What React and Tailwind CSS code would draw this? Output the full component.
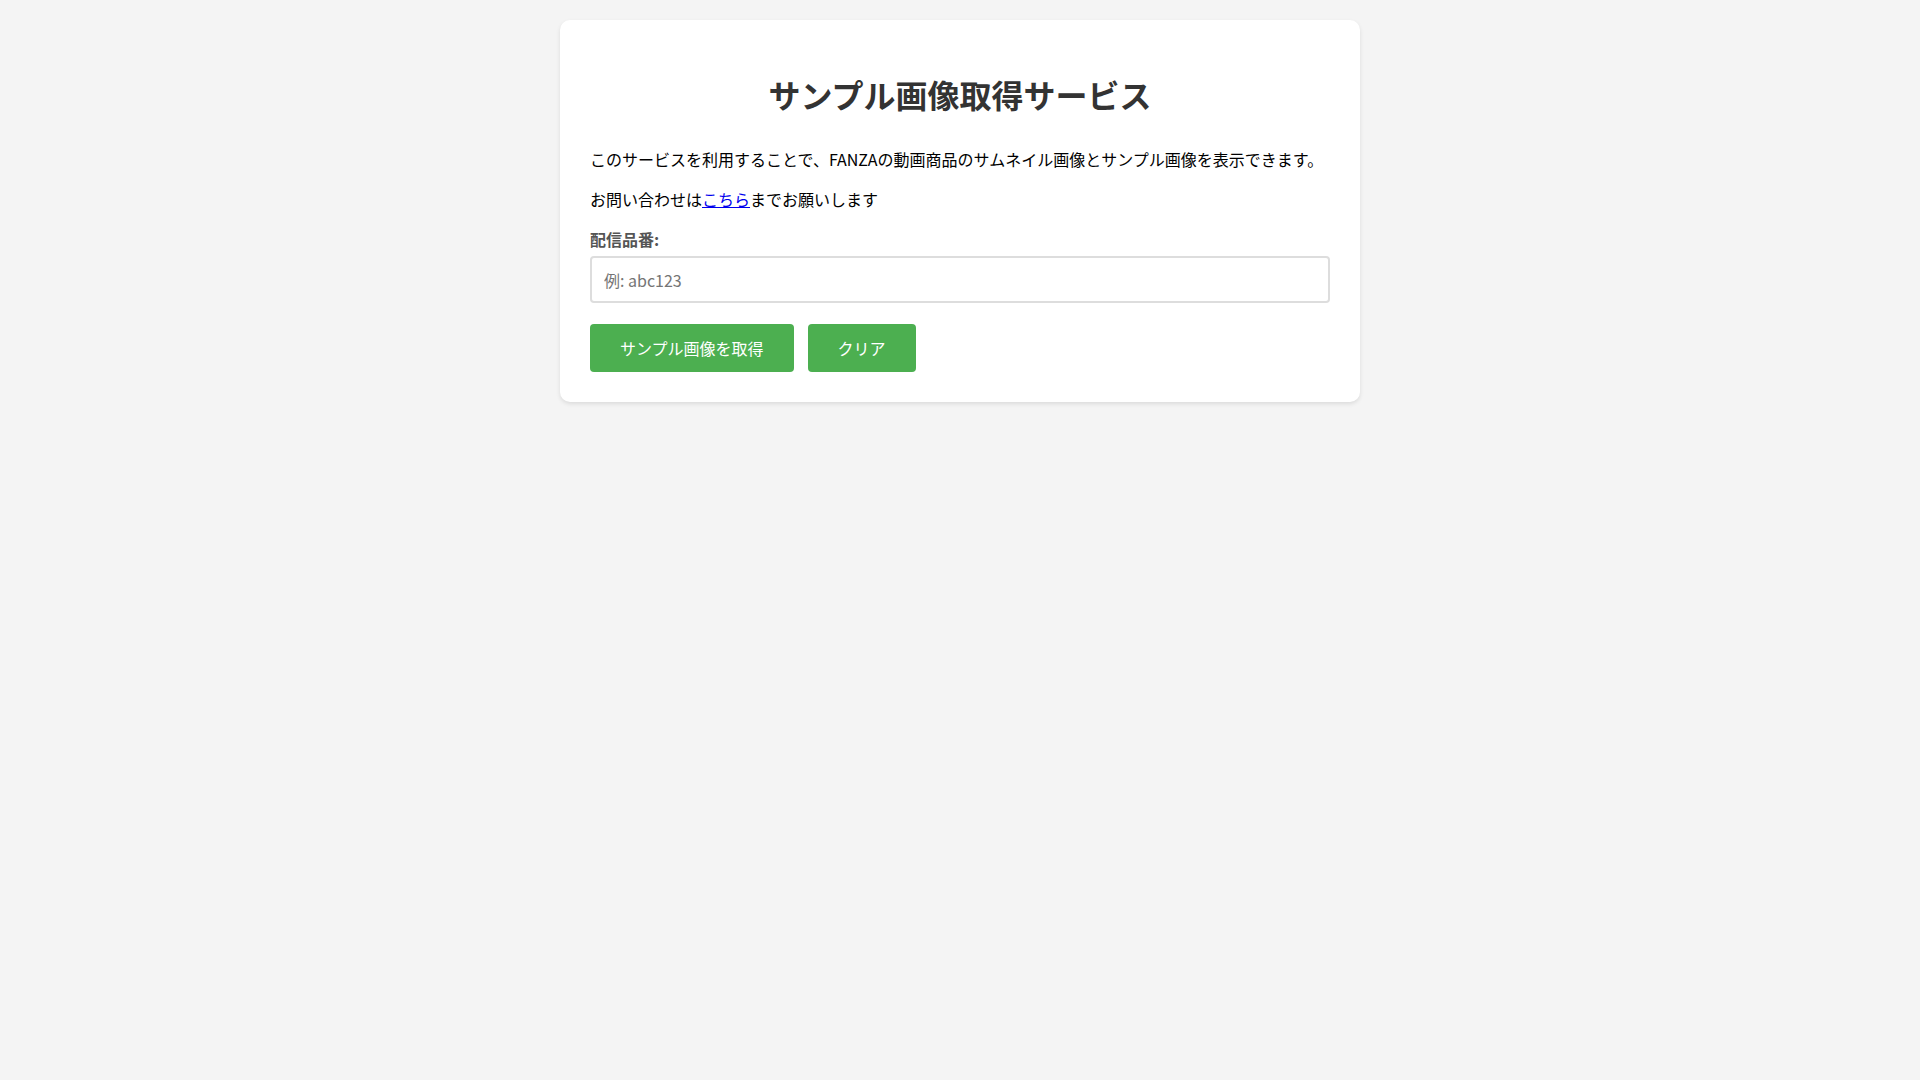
export default function App() {
  return (
    <div className="min-h-screen bg-[#f4f4f4] pt-5 px-5" style={{ fontFamily: '"Noto Sans CJK JP", "Noto Sans", sans-serif' }}>
      <div className="mx-auto w-[800px] bg-white rounded-[10px] shadow-[0_2px_4px_rgba(0,0,0,0.1)] p-[30px]">
        <h1 className="text-center text-[32px] leading-[46px] font-bold text-[#333] mt-[21px] mb-[30px]">
          サンプル画像取得サービス
        </h1>
        <p className="text-base leading-6 text-black mb-4 whitespace-nowrap">
          このサービスを利用することで、FANZAの動画商品のサムネイル画像とサンプル画像を表示できます。
        </p>
        <p className="text-base leading-6 text-black mb-4">
          お問い合わせは<a href="#" className="text-[#0000ee] underline">こちら</a>までお願いします
        </p>
        <label className="block text-base leading-6 font-bold text-[#555] mb-[5px]">配信品番:</label>
        <input
          type="text"
          placeholder="例: abc123"
          className="block w-full h-[47px] border-2 border-[#ddd] rounded-[4px] px-[12px] text-base text-[#333] placeholder:text-[#757575] outline-none"
        />
        <div className="flex gap-[14px] mt-[21px]">
          <button className="h-12 px-[30px] bg-[#4caf50] text-white text-base rounded-[4px]">サンプル画像を取得</button>
          <button className="h-12 px-[30px] bg-[#4caf50] text-white text-base rounded-[4px]">クリア</button>
        </div>
      </div>
    </div>
  );
}
